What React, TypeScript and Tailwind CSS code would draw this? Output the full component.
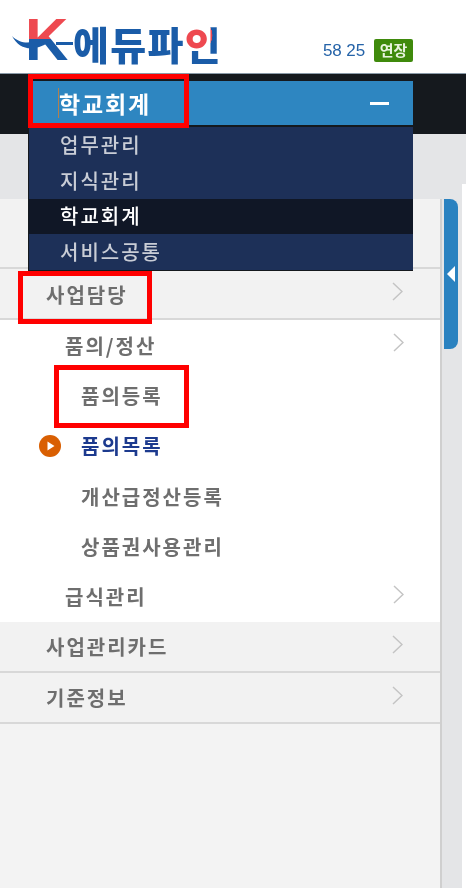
const FONT = "font-['Noto_Sans_CJK_KR','Noto_Sans',sans-serif]";

function Chevron({ className = "" }: { className?: string }) {
  return (
    <svg width="11" height="19" viewBox="0 0 11 19" className={className} fill="none">
      <polyline points="1,1 10,9.5 1,18" stroke="#c4c4c4" strokeWidth="1.5" />
    </svg>
  );
}

function Logo() {
  return (
    <div className="relative h-[73px] w-[240px] blur-[0.4px]">
      <svg width="80" height="50" viewBox="0 0 80 50" className="absolute left-0 top-[16px]">
        <path d="M12 20 C22 30 34 27 48 21 L48 27 C34 35 20 35 12 20 Z" fill="#1a5ca8" />
        <rect x="56" y="26" width="17" height="3" fill="#1a5ca8" />
      </svg>
      <span className="absolute left-[25px] top-[8px] bg-[linear-gradient(180deg,#ee4950_0,#ee4950_48%,#1a5ca8_48%)] bg-clip-text font-['Liberation_Sans',sans-serif] text-[60px] leading-[64px] font-bold text-transparent">
        K
      </span>
      <span className="absolute left-[73px] top-[19px] flex font-['Noto_Sans_CJK_KR',sans-serif] text-[39px] leading-[48px] font-black tracking-[1.4px] text-[#1a5ca8]">
        에듀파
        <span className="bg-[radial-gradient(circle_at_32%_34%,#ee4950_0,#ee4950_38%,#1a5ca8_39%)] bg-clip-text text-transparent">
          인
        </span>
      </span>
    </div>
  );
}

function Row({
  label,
  tone,
  chevron,
  active,
}: {
  label: string;
  tone: "top" | "mid" | "leaf";
  chevron?: boolean;
  active?: boolean;
}) {
  const base =
    tone === "top"
      ? "h-[51px] border-b-2 border-[#d8d8d8] bg-[#f2f2f2] pl-[46px] pt-[2px]"
      : tone === "mid"
        ? "h-[50.33px] pl-[65px] pt-px"
        : "h-[50.33px] pl-[81px] pt-px";
  return (
    <div className={`relative flex shrink-0 items-center ${base}`}>
      {active && (
        <svg width="22" height="22" viewBox="0 0 22 22" className="absolute left-[39px] top-[14px]">
          <circle cx="11" cy="11" r="11" fill="#d95f02" />
          <polygon points="8.5,6.5 15.5,11 8.5,15.5" fill="#fff" />
        </svg>
      )}
      <span className={`text-[20px] font-bold tracking-[2px] ${active ? "text-[#1c3a8e]" : "text-[#6e6e6e]"}`}>
        {label}
      </span>
      {chevron && <Chevron className={`absolute ${tone === "top" ? "left-[392px]" : "left-[393px]"} top-[13px]`} />}
    </div>
  );
}

function Menu() {
  const items = [
    { t: "업무관리" },
    { t: "지식관리" },
    { t: "학교회계", on: true },
    { t: "서비스공통" },
  ];
  return (
    <div className="absolute left-[28px] top-[81px] w-[385px] border-l border-[#15191e] blur-[0.4px]">
      <div className="relative flex h-[44px] items-center justify-between bg-[#2e86c1] pr-[24px] pl-[30px]">
        <span className="absolute left-[29px] top-[7px] h-[30px] w-px bg-[#b08050]" />
        <span className="text-[23px] font-bold tracking-[1.8px] text-white">학교회계</span>
        <span className="h-[3px] w-[19px] bg-white" />
      </div>
      <div className="mt-[2px] border-b border-[#15191e] bg-[#1d3058]">
        {items.map((i) => (
          <div
            key={i.t}
            className={`flex h-[35.75px] items-center pl-[31px] text-[20px] font-medium tracking-[2px] ${
              i.on ? "bg-[#101726] font-bold text-white" : "text-[#c9cdd6]"
            }`}
          >
            {i.t}
          </div>
        ))}
      </div>
    </div>
  );
}

export default function App() {
  return (
    <div className={`relative flex h-[888px] w-[466px] flex-col overflow-hidden bg-white ${FONT}`}>
      <header className="flex h-[73px] shrink-0 bg-white">
        <Logo />
        <div className="ml-[83px] flex items-start gap-[9px] pt-[39px] blur-[0.3px]">
          <span className="w-[42px] font-['Liberation_Sans',sans-serif] text-[17px] leading-[23px] tracking-[-0.1px] whitespace-nowrap text-[#2563a8]">
            58 25
          </span>
          <span className="flex h-[23px] w-[39px] items-center justify-center rounded-[2px] bg-[#3f8a0c] text-[15px] font-bold text-[#e8f3df]">
            연장
          </span>
        </div>
      </header>
      <div className="h-[61px] shrink-0 border-t border-[#8a9aa8] bg-[#15191e]" />
      <div className="h-[50px] shrink-0 bg-[#e4e5e7]" />

      <div className="flex min-h-0 flex-1 bg-white">
        <div className="flex w-[462px] shrink-0 flex-col bg-[#e4e5e7]">
          <div className="h-[15px] shrink-0" />
          <div className="flex min-h-0 flex-1">
            <nav className="flex w-[442px] shrink-0 flex-col border-r-2 border-[#cfcfcf] bg-white blur-[0.4px]">
              <div className="h-[70px] shrink-0 border-b-2 border-[#d8d8d8] bg-[#f2f2f2]" />
              <Row label="사업담당" tone="top" chevron />
              <Row label="품의/정산" tone="mid" chevron />
              <Row label="품의등록" tone="leaf" />
              <Row label="품의목록" tone="leaf" active />
              <Row label="개산급정산등록" tone="leaf" />
              <Row label="상품권사용관리" tone="leaf" />
              <Row label="급식관리" tone="mid" chevron />
              <Row label="사업관리카드" tone="top" chevron />
              <Row label="기준정보" tone="top" chevron />
              <div className="flex-1 bg-[#f3f3f3]" />
            </nav>
            <div className="flex-1">
              <button className="ml-[2px] flex h-[150px] w-[14px] items-center justify-center rounded-tr-[8px] rounded-br-[8px] bg-[#2a82c0]">
                <svg width="8" height="16" viewBox="0 0 8 16">
                  <polygon points="8,0 8,16 0,8" fill="#fff" />
                </svg>
              </button>
            </div>
          </div>
        </div>
      </div>

      <Menu />

      <div className="absolute left-[28px] top-[74px] h-[54px] w-[161px] border-[5px] border-[#ff0000]" />
      <div className="absolute left-[18px] top-[271px] h-[53px] w-[134px] border-[5px] border-[#ff0000]" />
      <div className="absolute left-[54px] top-[365px] h-[63px] w-[135px] border-[5px] border-[#ff0000]" />
    </div>
  );
}
